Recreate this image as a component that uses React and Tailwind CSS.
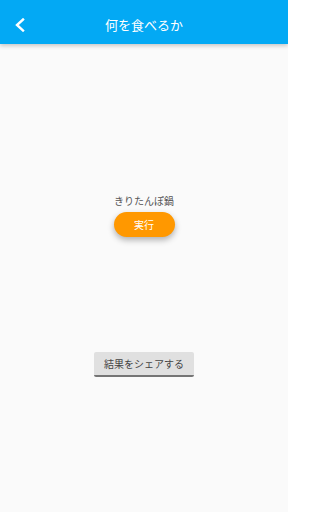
import React, { useState } from "react";

const dishes = ["きりたんぽ鍋", "ラーメン", "カレーライス", "寿司", "お好み焼き"];

const App = () => {
  const [dish, setDish] = useState(dishes[0]);

  const pick = () => {
    setDish(dishes[Math.floor(Math.random() * dishes.length)]);
  };

  return (
    <div
      className="w-[288px] h-[512px] bg-[#fafafa] flex flex-col overflow-hidden"
      style={{ fontFamily: '"Noto Sans CJK JP", Roboto, sans-serif' }}
    >
      <header className="h-[44px] pt-[6px] bg-[#03a9f4] flex items-center relative shadow-[0_2px_4px_rgba(0,0,0,0.2)] z-10">
        <button className="w-[40px] h-[38px] flex items-center justify-center text-white">
          <svg width="12" height="14" viewBox="0 0 12 14" fill="none">
            <path d="M9 1.5 L3 7 L9 12.5" stroke="white" strokeWidth="2.4" strokeLinecap="square" />
          </svg>
        </button>
        <h1 className="absolute left-0 right-0 text-center text-white text-[13px] pointer-events-none">
          何を食べるか
        </h1>
      </header>

      <main className="flex flex-col items-center pt-[150px]">
        <p className="text-[10px] leading-[13px] text-[#555]">{dish}</p>
        <button
          onClick={pick}
          className="mt-[5px] w-[61px] h-[25px] rounded-full bg-[#ff9800] text-white text-[10px] shadow-[0_3px_6px_rgba(0,0,0,0.3)]"
        >
          実行
        </button>

        <button className="mt-[115px] w-[100px] h-[25px] rounded-[2px] bg-[#e0e0e0] text-[#444] text-[10px] border-b-2 border-[#757575]">
          結果をシェアする
        </button>
      </main>
    </div>
  );
};

export default App;
